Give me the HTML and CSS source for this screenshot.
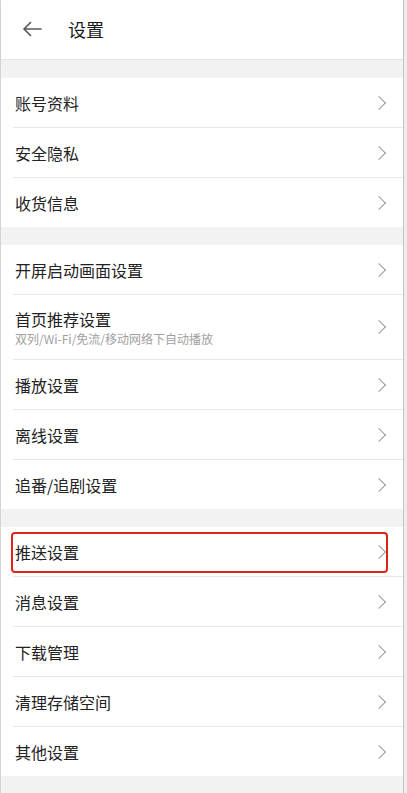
FILE: index.html
```html
<!DOCTYPE html>
<html lang="zh-CN">
<head>
<meta charset="utf-8">
<title>设置</title>
<link rel="stylesheet" href="styles.css">
</head>
<body>
<div class="screen">
  <header class="topbar">
    <svg class="back" width="20" height="16" viewBox="0 0 20 16">
      <path d="M19 8H2M8.5 1.5L2 8l6.5 6.5" fill="none" stroke="#5a5a5a" stroke-width="1.7" stroke-linecap="round" stroke-linejoin="round"/>
    </svg>
    <h1 class="title">设置</h1>
  </header>

  <div class="gap"></div>
  <ul class="group">
    <li class="row"><span class="label">账号资料</span><i class="chev"></i></li>
    <li class="row"><span class="label">安全隐私</span><i class="chev"></i></li>
    <li class="row"><span class="label">收货信息</span><i class="chev"></i></li>
  </ul>

  <div class="gap"></div>
  <ul class="group">
    <li class="row"><span class="label">开屏启动画面设置</span><i class="chev"></i></li>
    <li class="row row-tall">
      <div class="texts">
        <span class="label">首页推荐设置</span>
        <span class="sub">双列/Wi-Fi/免流/移动网络下自动播放</span>
      </div>
      <i class="chev"></i>
    </li>
    <li class="row"><span class="label">播放设置</span><i class="chev"></i></li>
    <li class="row"><span class="label">离线设置</span><i class="chev"></i></li>
    <li class="row"><span class="label">追番/追剧设置</span><i class="chev"></i></li>
  </ul>

  <div class="gap"></div>
  <ul class="group">
    <li class="row row-marked"><span class="label">推送设置</span><i class="chev"></i><span class="mark"></span></li>
    <li class="row"><span class="label">消息设置</span><i class="chev"></i></li>
    <li class="row"><span class="label">下载管理</span><i class="chev"></i></li>
    <li class="row"><span class="label">清理存储空间</span><i class="chev"></i></li>
    <li class="row"><span class="label">其他设置</span><i class="chev"></i></li>
  </ul>
  <div class="tail"></div>
</div>
</body>
</html>
```

FILE: styles.css
```css
html, body {
  margin: 0;
  padding: 0;
  background: #ededed;
}

body {
  font-family: "Noto Sans CJK SC", "Noto Sans", sans-serif;
  color: #222;
}

.screen {
  width: 402px;
  min-height: 793px;
  background: #f2f2f2;
  border-left: 1px solid #d4d4d4;
  border-right: 1px solid #c6c6c6;
}

.topbar {
  height: 59px;
  background: #fff;
  display: flex;
  align-items: center;
  padding-left: 21px;
  border-bottom: 1px solid #e4e4e4;
  box-shadow: 0 1px 2px rgba(0, 0, 0, 0.05);
}

.back {
  display: block;
  margin-top: -1px;
}

.title {
  margin: -2px 0 0 26px;
  font-size: 18px;
  font-weight: 400;
  color: #1a1a1a;
  line-height: 1;
}

.gap {
  height: 18px;
  background: #f2f2f2;
}

.group {
  list-style: none;
  margin: 0;
  padding: 0;
  background: #fff;
}

.row {
  position: relative;
  height: 49px;
  display: flex;
  align-items: center;
  justify-content: space-between;
  padding: 0 17px 0 14px;
}

.row + .row {
  border-top: 1px solid #e8e8e8;
  margin-left: 12px;
  padding-left: 2px;
}

.row-tall {
  height: 64px;
}

.label {
  font-size: 16px;
  line-height: 1;
  color: #222;
}

.texts {
  display: flex;
  flex-direction: column;
  gap: 5px;
  padding-top: 2px;
}

.sub {
  font-size: 12px;
  line-height: 1.1;
  color: #a0a0a0;
}

.chev {
  width: 9px;
  height: 9px;
  border-top: 1.2px solid #9a9a9a;
  border-right: 1.2px solid #9a9a9a;
  transform: rotate(45deg);
  margin-right: 2px;
}

/* highlight frame around the push settings row */
.mark {
  position: absolute;
  left: 10px;
  top: 5px;
  width: 373px;
  height: 37px;
  border: 2px solid #e2231a;
  border-radius: 4px;
}

.tail {
  height: 16px;
}
```
